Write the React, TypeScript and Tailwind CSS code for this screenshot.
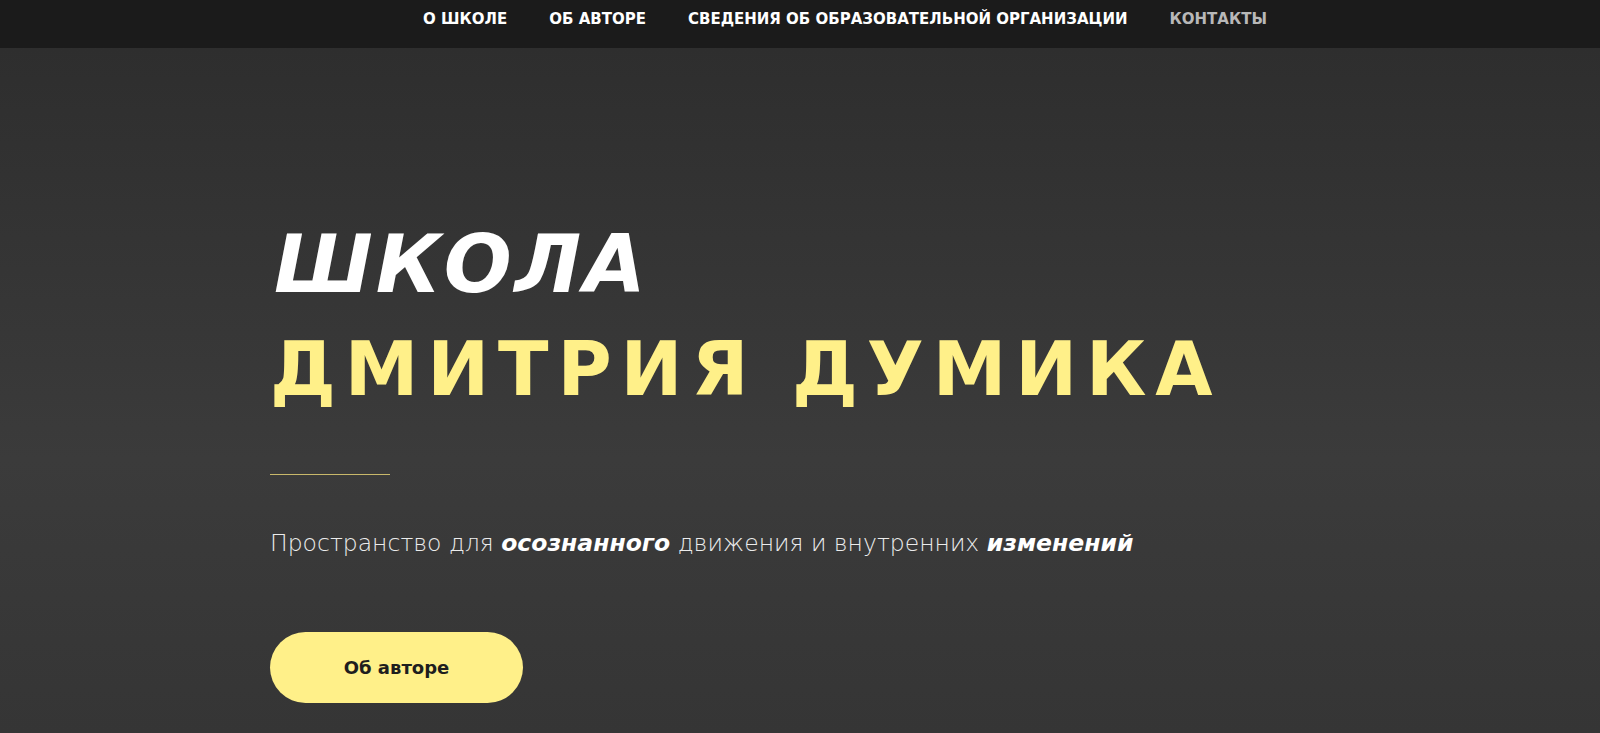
import React from "react";

export default function App() {
  const font = { fontFamily: '"DejaVu Sans", "Noto Sans", sans-serif' };
  return (
    <div className="w-full h-[733px] overflow-hidden flex flex-col" style={font}>
      <nav className="h-[48px] bg-[#1b1b1b] flex items-center justify-center shrink-0">
        <ul className="flex items-center gap-[42px] text-[15px] font-bold uppercase pl-[90px] pb-[9px]">
          <li className="text-white">О школе</li>
          <li className="text-white">Об авторе</li>
          <li className="text-white">Сведения об образовательной организации</li>
          <li className="text-[#b8b8b8]">Контакты</li>
        </ul>
      </nav>
      <main className="flex-1 bg-[linear-gradient(180deg,#2e2e2e_0%,#3b3b3b_60%,#353535_100%)] pl-[270px] pt-[177px]">
        <h1 className="font-bold leading-none">
          <span className="block text-white italic text-[80px] tracking-[0.035em] pl-[4px]">ШКОЛА</span>
          <span className="block text-[#fff089] text-[74px] tracking-[0.12em] mt-[27px]">ДМИТРИЯ ДУМИКА</span>
        </h1>
        <div className="w-[120px] h-px bg-[#c8b86a] mt-[68px]" />
        <p className="mt-[51px] text-[23.5px] text-[#ececec] font-light">
          Пространство для <b className="font-bold italic text-white">осознанного</b> движения и внутренних{" "}
          <b className="font-bold italic text-white">изменений</b>
        </p>
        <button className="mt-[71px] w-[253px] h-[71px] rounded-full bg-[#fff089] text-[#1e1e1e] font-bold text-[18px]">
          Об авторе
        </button>
      </main>
    </div>
  );
}
